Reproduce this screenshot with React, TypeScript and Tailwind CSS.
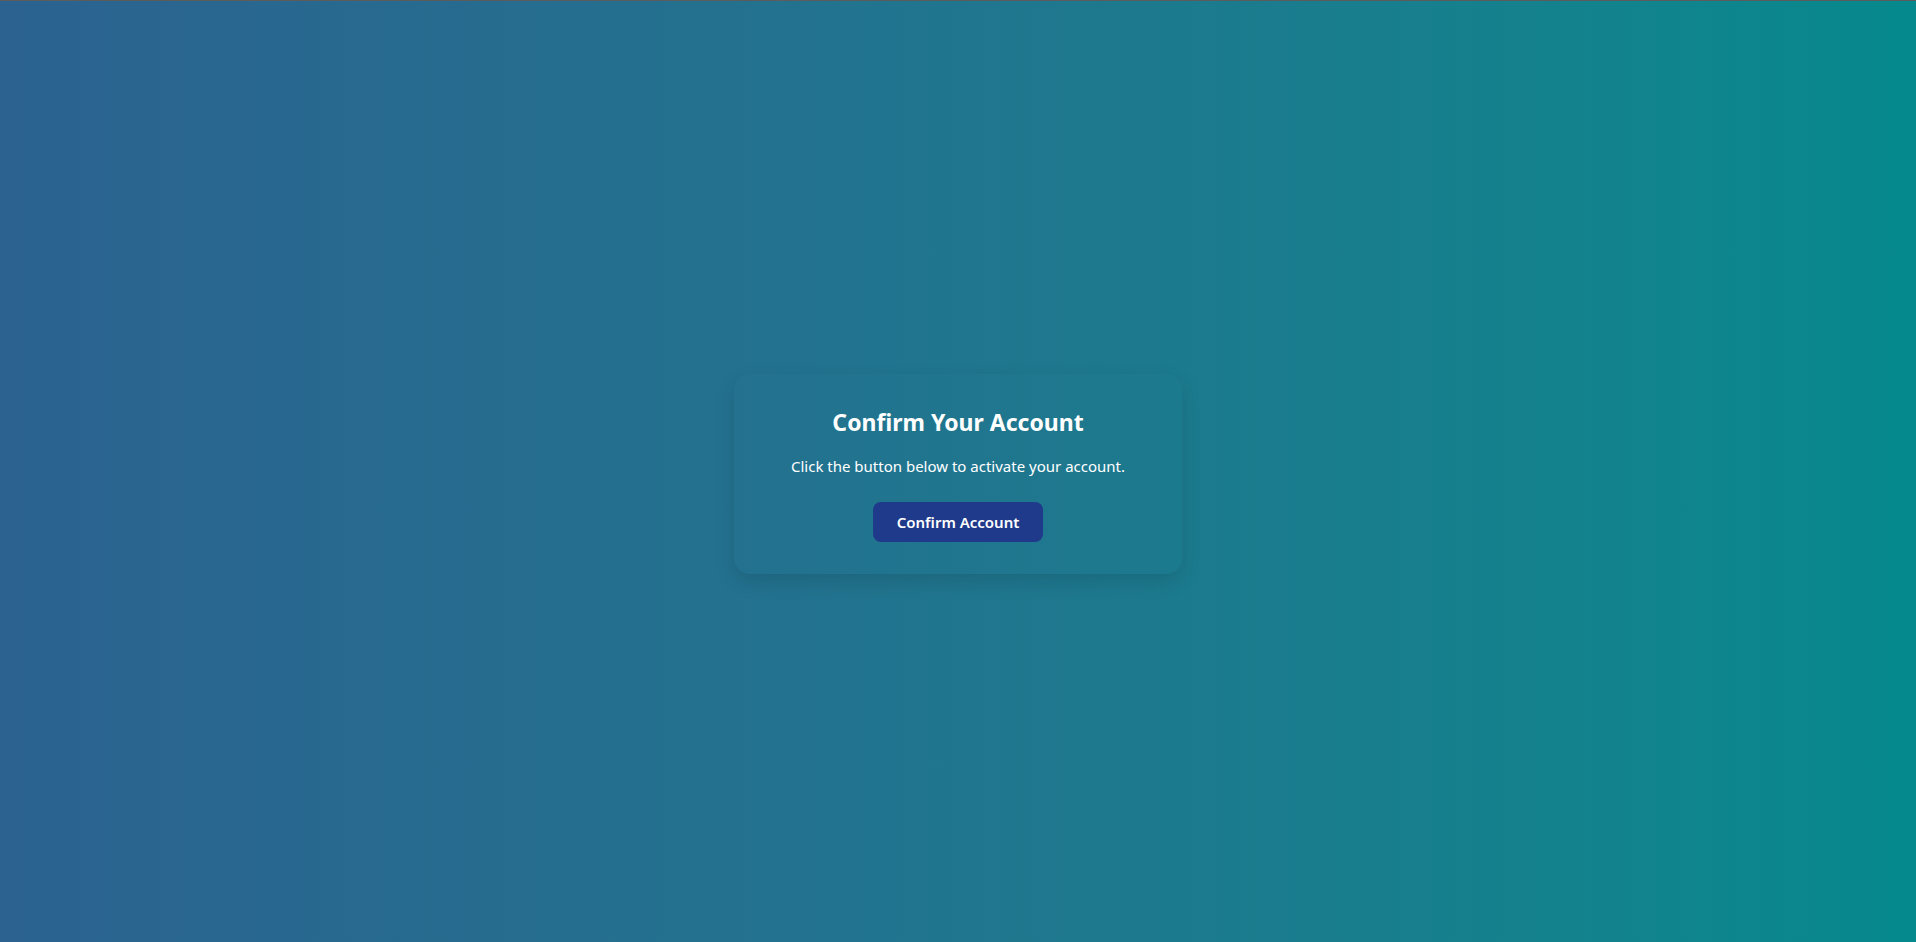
export default function App() {
  return (
    <div className="min-h-screen flex flex-col" style={{ fontFamily: '"Segoe UI", "Noto Sans", Lato, sans-serif' }}>
      <div className="h-px bg-[#5c5c5c]" />
      <main className="flex-1 flex items-center justify-center bg-gradient-to-r from-[#2b6290] to-[#05898c]">
        {/* Card */}
        <div className="mt-[5px] w-[448px] rounded-2xl bg-white/[0.005] p-8 text-center text-white shadow-[0_8px_20px_rgba(0,0,0,0.12)]">
          <h1 className="mb-4 text-[23px] leading-8 font-bold">Confirm Your Account</h1>
          <p className="mb-6 text-[15px] leading-6">Click the button below to activate your account.</p>
          <button className="rounded-lg bg-[#1f3a8a] px-6 py-2 text-[15px] leading-6 font-semibold text-white">
            Confirm Account
          </button>
        </div>
      </main>
    </div>
  );
}
